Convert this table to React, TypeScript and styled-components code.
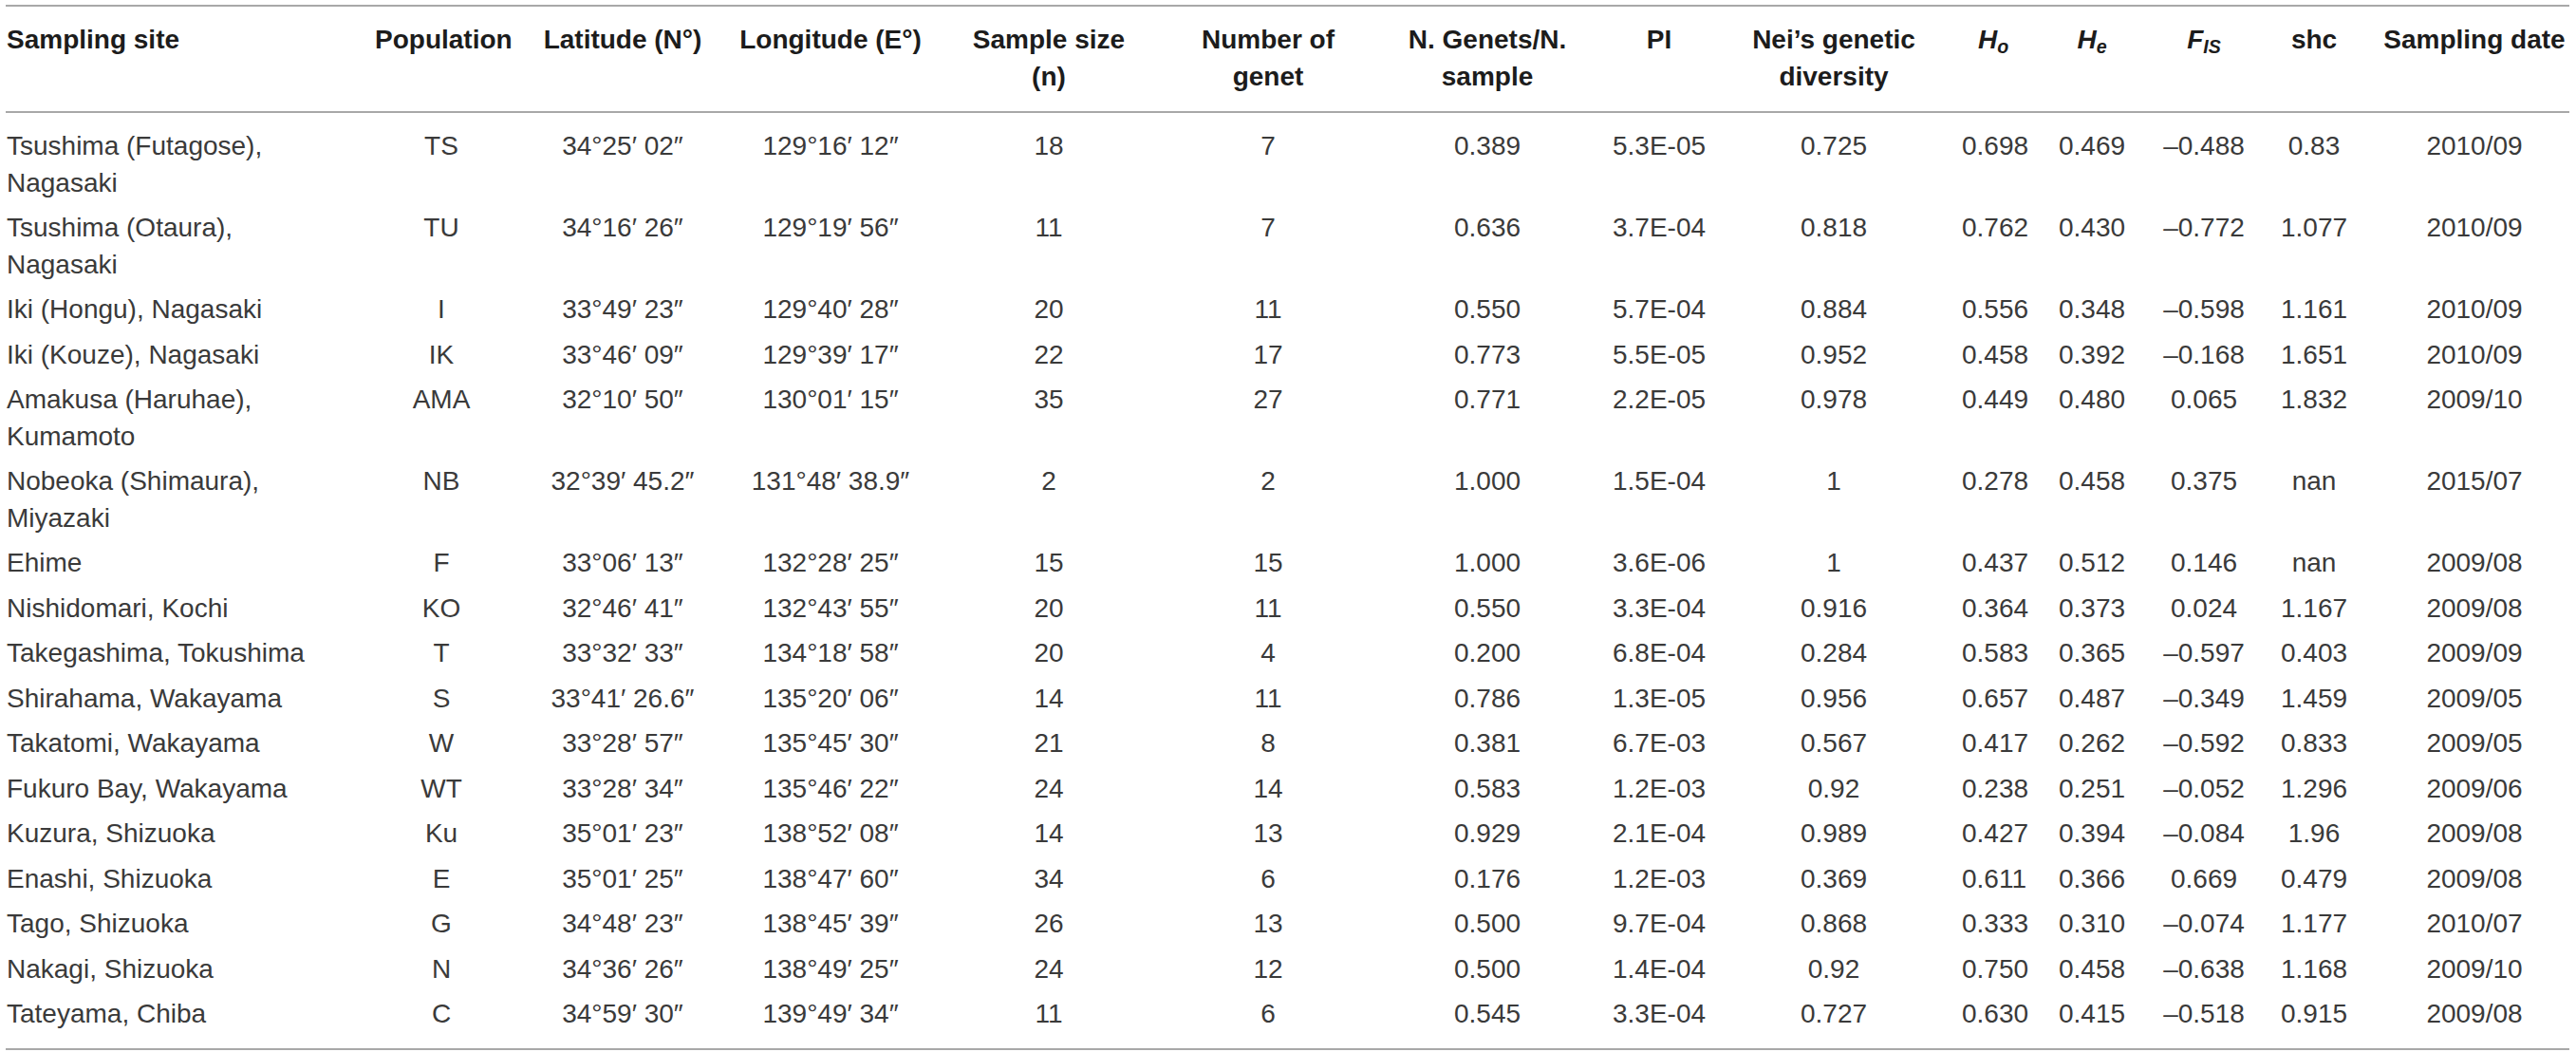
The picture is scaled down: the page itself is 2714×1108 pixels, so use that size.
import { Fragment } from "react";
import styled, { createGlobalStyle } from "styled-components";

const GlobalStyle = createGlobalStyle`
  html, body {
    margin: 0;
    padding: 0;
    background: #ffffff;
  }
  body {
    font-family: "Liberation Sans", Arial, sans-serif;
  }
`;

const Page = styled.div`
  padding: 5px 0 0 6px;
`;

const Table = styled.table`
  width: 2701px;
  table-layout: fixed;
  border-collapse: collapse;
  font-family: "Liberation Sans", Arial, sans-serif;
  font-size: 28px;
  line-height: 38.5px;
`;

const Col = styled.col<{ $width: number }>`
  width: ${(p) => p.$width}px;
`;

const Head = styled.th<{ $left?: boolean }>`
  padding: 16px 0 17px ${(p) => (p.$left ? "1px" : "0")};
  border-top: 2px solid #a8a8a8;
  border-bottom: 2px solid #a8a8a8;
  text-align: ${(p) => (p.$left ? "left" : "center")};
  vertical-align: top;
  font-weight: 700;
  color: #1c1c1c;
  white-space: nowrap;
`;

const Sym = styled.i`
  font-style: italic;
  font-weight: 700;

  sub {
    font-size: 0.7em;
    line-height: 0;
    vertical-align: -0.28em;
  }
`;

const Body = styled.tbody`
  tr:first-child td {
    padding-top: 16px;
  }
  tr:last-child td {
    padding-bottom: 16px;
    border-bottom: 2px solid #a8a8a8;
  }
`;

const Cell = styled.td<{ $left?: boolean }>`
  padding: 4.5px 0 4.5px ${(p) => (p.$left ? "1px" : "0")};
  text-align: ${(p) => (p.$left ? "left" : "center")};
  vertical-align: top;
  color: #3a3a3a;
  white-space: ${(p) => (p.$left ? "pre-line" : "nowrap")};
`;

const widths = [389, 140, 242, 196, 264, 198, 264, 98, 270, 66, 142, 94, 138, 200];

const headers = [
  "Sampling site",
  "Population",
  "Latitude (N°)",
  "Longitude (E°)",
  "Sample size\n(n)",
  "Number of\ngenet",
  "N. Genets/N.\nsample",
  "PI",
  "Nei’s genetic\ndiversity",
  "Ho",
  "He",
  "FIS",
  "shc",
  "Sampling date",
];

const rows: string[][] = [
  ["Tsushima (Futagose),\nNagasaki", "TS", "34°25′ 02″", "129°16′ 12″", "18", "7", "0.389", "5.3E-05", "0.725", "0.698", "0.469", "–0.488", "0.83", "2010/09"],
  ["Tsushima (Otaura),\nNagasaki", "TU", "34°16′ 26″", "129°19′ 56″", "11", "7", "0.636", "3.7E-04", "0.818", "0.762", "0.430", "–0.772", "1.077", "2010/09"],
  ["Iki (Hongu), Nagasaki", "I", "33°49′ 23″", "129°40′ 28″", "20", "11", "0.550", "5.7E-04", "0.884", "0.556", "0.348", "–0.598", "1.161", "2010/09"],
  ["Iki (Kouze), Nagasaki", "IK", "33°46′ 09″", "129°39′ 17″", "22", "17", "0.773", "5.5E-05", "0.952", "0.458", "0.392", "–0.168", "1.651", "2010/09"],
  ["Amakusa (Haruhae),\nKumamoto", "AMA", "32°10′ 50″", "130°01′ 15″", "35", "27", "0.771", "2.2E-05", "0.978", "0.449", "0.480", "0.065", "1.832", "2009/10"],
  ["Nobeoka (Shimaura),\nMiyazaki", "NB", "32°39′ 45.2″", "131°48′ 38.9″", "2", "2", "1.000", "1.5E-04", "1", "0.278", "0.458", "0.375", "nan", "2015/07"],
  ["Ehime", "F", "33°06′ 13″", "132°28′ 25″", "15", "15", "1.000", "3.6E-06", "1", "0.437", "0.512", "0.146", "nan", "2009/08"],
  ["Nishidomari, Kochi", "KO", "32°46′ 41″", "132°43′ 55″", "20", "11", "0.550", "3.3E-04", "0.916", "0.364", "0.373", "0.024", "1.167", "2009/08"],
  ["Takegashima, Tokushima", "T", "33°32′ 33″", "134°18′ 58″", "20", "4", "0.200", "6.8E-04", "0.284", "0.583", "0.365", "–0.597", "0.403", "2009/09"],
  ["Shirahama, Wakayama", "S", "33°41′ 26.6″", "135°20′ 06″", "14", "11", "0.786", "1.3E-05", "0.956", "0.657", "0.487", "–0.349", "1.459", "2009/05"],
  ["Takatomi, Wakayama", "W", "33°28′ 57″", "135°45′ 30″", "21", "8", "0.381", "6.7E-03", "0.567", "0.417", "0.262", "–0.592", "0.833", "2009/05"],
  ["Fukuro Bay, Wakayama", "WT", "33°28′ 34″", "135°46′ 22″", "24", "14", "0.583", "1.2E-03", "0.92", "0.238", "0.251", "–0.052", "1.296", "2009/06"],
  ["Kuzura, Shizuoka", "Ku", "35°01′ 23″", "138°52′ 08″", "14", "13", "0.929", "2.1E-04", "0.989", "0.427", "0.394", "–0.084", "1.96", "2009/08"],
  ["Enashi, Shizuoka", "E", "35°01′ 25″", "138°47′ 60″", "34", "6", "0.176", "1.2E-03", "0.369", "0.611", "0.366", "0.669", "0.479", "2009/08"],
  ["Tago, Shizuoka", "G", "34°48′ 23″", "138°45′ 39″", "26", "13", "0.500", "9.7E-04", "0.868", "0.333", "0.310", "–0.074", "1.177", "2010/07"],
  ["Nakagi, Shizuoka", "N", "34°36′ 26″", "138°49′ 25″", "24", "12", "0.500", "1.4E-04", "0.92", "0.750", "0.458", "–0.638", "1.168", "2009/10"],
  ["Tateyama, Chiba", "C", "34°59′ 30″", "139°49′ 34″", "11", "6", "0.545", "3.3E-04", "0.727", "0.630", "0.415", "–0.518", "0.915", "2009/08"],
];

// H_o, H_e and F_IS are set as italic symbols with a subscript
const symbols: Record<string, [string, string]> = {
  Ho: ["H", "o"],
  He: ["H", "e"],
  FIS: ["F", "IS"],
};

function HeaderLabel({ text }: { text: string }) {
  const sym = symbols[text];
  if (sym) {
    return (
      <Sym>
        {sym[0]}
        <sub>{sym[1]}</sub>
      </Sym>
    );
  }
  const lines = text.split("\n");
  return (
    <>
      {lines.map((line, i) => (
        <Fragment key={i}>
          {i > 0 && <br />}
          {line}
        </Fragment>
      ))}
    </>
  );
}

export default function App() {
  return (
    <Page>
      <GlobalStyle />
      <Table>
        <colgroup>
          {widths.map((w, i) => (
            <Col key={i} $width={w} />
          ))}
        </colgroup>
        <thead>
          <tr>
            {headers.map((h, i) => (
              <Head key={h} $left={i === 0}>
                <HeaderLabel text={h} />
              </Head>
            ))}
          </tr>
        </thead>
        <Body>
          {rows.map((row) => (
            <tr key={row[1]}>
              {row.map((value, i) => (
                <Cell key={i} $left={i === 0}>
                  {value}
                </Cell>
              ))}
            </tr>
          ))}
        </Body>
      </Table>
    </Page>
  );
}
